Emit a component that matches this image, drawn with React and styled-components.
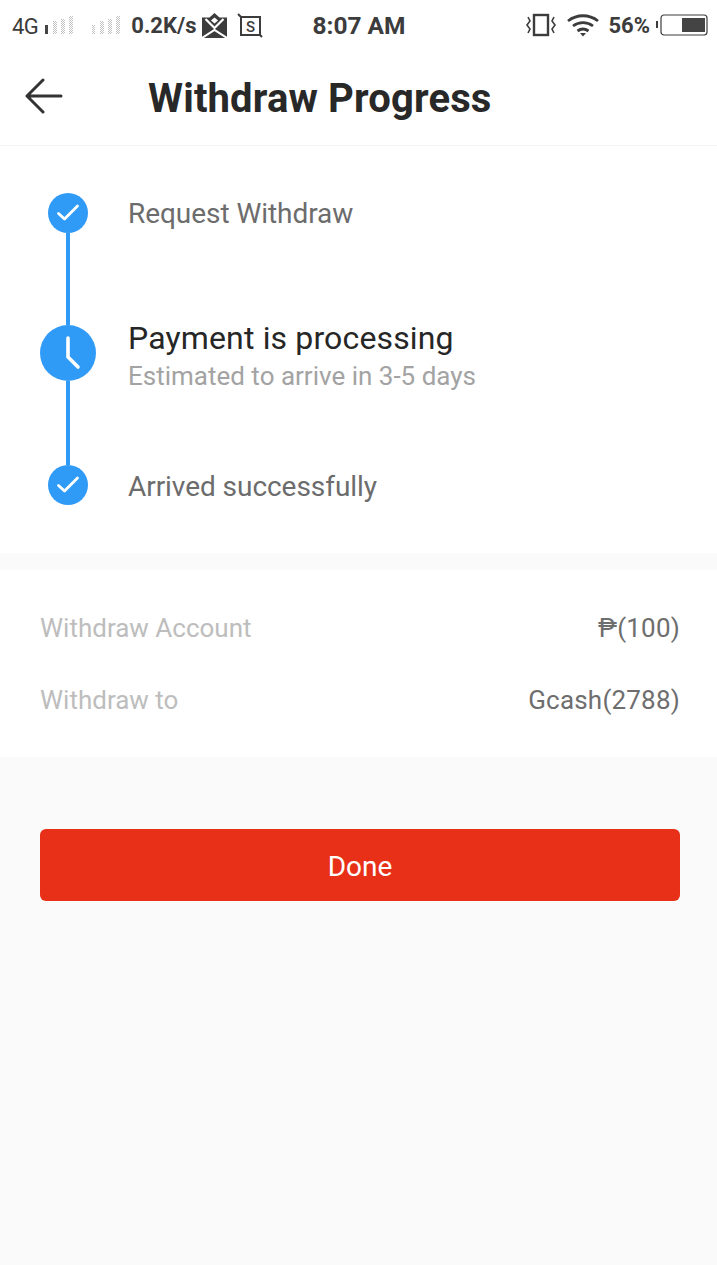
import React from "react";
import styled, { createGlobalStyle } from "styled-components";

const GlobalStyle = createGlobalStyle`
  html, body {
    margin: 0;
    padding: 0;
    background: #fafafa;
    font-family: Roboto, "Liberation Sans", sans-serif;
  }
`;

const Page = styled.div`
  width: 717px;
  height: 1265px;
  overflow: hidden;
  background: #fafafa;
`;

const StatusBar = styled.div`
  height: 50px;
  background: #fff;
  display: grid;
  grid-template-columns: 1fr auto 1fr;
  align-items: center;
  color: #3c3c3c;
`;

const StatusLeft = styled.div`
  display: flex;
  align-items: center;
  padding-left: 12px;
`;

const StatusRight = styled.div`
  display: flex;
  align-items: center;
  justify-content: flex-end;
  padding-right: 9px;
`;

const NetworkType = styled.span`
  font-size: 22px;
  margin: 3px 7px 0 0;
  letter-spacing: -0.5px;
`;

const BarsGroup = styled.svg`
  flex: none;
  margin-right: ${(p) => p.$gap}px;
`;

const Speed = styled.span`
  font-size: 22px;
  font-weight: 700;
  margin: 0 6px 0 0;
`;

const Clock = styled.span`
  font-size: 24.5px;
  font-weight: 700;
  margin-left: 1px;
`;

const Percent = styled.span`
  font-size: 22px;
  font-weight: 700;
  margin: 0 6px 0 9px;
`;

const MailSvg = styled.svg`
  flex: none;
  margin-right: 10px;
`;

const VibrateSvg = styled.svg`
  flex: none;
  margin-right: 11px;
`;

const Header = styled.header`
  height: 95px;
  background: #fff;
  border-bottom: 1px solid #f5f5f5;
  display: flex;
  align-items: center;
  padding-left: 24px;
`;

const BackSvg = styled.svg`
  flex: none;
  margin-top: -4px;
`;

const Title = styled.h1`
  margin: 2px 0 0 84px;
  font-size: 40px;
  letter-spacing: 0.15px;
  font-weight: 700;
  color: #282828;
`;

const StepsCard = styled.section`
  height: 360px;
  padding: 47px 40px 0;
  background: #fff;
  display: flex;
  margin-bottom: 17px;
`;

const Rail = styled.div`
  width: 56px;
  display: flex;
  flex-direction: column;
  align-items: center;
`;

const Dot = styled.div`
  flex: none;
  width: ${(p) => (p.$big ? 56 : 40)}px;
  height: ${(p) => (p.$big ? 56 : 40)}px;
  border-radius: 50%;
  background: #2f9bf7;
  display: flex;
  align-items: center;
  justify-content: center;
`;

const Line = styled.div`
  flex: none;
  width: 4px;
  height: ${(p) => p.$h}px;
  background: #2f9bf7;
`;

const StepTexts = styled.div`
  margin-left: 32px;
  display: flex;
  flex-direction: column;
`;

const DoneStep = styled.div`
  height: 40px;
  display: flex;
  align-items: center;
  font-size: 28px;
  letter-spacing: -0.05px;
  color: #6c6c6c;
`;

const ActiveStep = styled.div`
  box-sizing: border-box;
  height: 233px;
  padding-top: 15px;
  display: flex;
  flex-direction: column;
  justify-content: center;
`;

const ActiveTitle = styled.div`
  font-size: 32px;
  letter-spacing: 0.15px;
  line-height: 38px;
  color: #262626;
`;

const ActiveSub = styled.div`
  font-size: 26px;
  line-height: 39px;
  color: #a3a3a3;
`;

const InfoCard = styled.section`
  background: #fff;
  height: 187px;
  padding: 22px 37px 0 40px;
  box-sizing: border-box;
  margin-bottom: 72px;
`;

const InfoRow = styled.div`
  height: 72px;
  display: flex;
  align-items: center;
  justify-content: space-between;
  font-size: 26px;
`;

const InfoLabel = styled.span`
  color: #bdbdbd;
`;

const InfoValue = styled.span`
  color: #6e6e6e;
  letter-spacing: 0.2px;
`;

const DoneButton = styled.button`
  display: block;
  width: 640px;
  height: 72px;
  margin-left: 40px;
  padding: 2px 0 0;
  border: none;
  border-radius: 6px;
  background: #e83018;
  color: #fff;
  font-family: inherit;
  font-size: 28px;
`;

const BackArrow = () => (
  <BackSvg width="40" height="36" viewBox="0 0 40 36" fill="none" stroke="#333" strokeWidth="3" strokeLinecap="round" strokeLinejoin="round">
    <path d="M37 18H3M19 2L3 18l16 16" />
  </BackSvg>
);

const CheckIcon = () => (
  <svg width="24" height="24" viewBox="0 0 24 24" fill="none" stroke="#fff" strokeWidth="2.8" strokeLinecap="round" strokeLinejoin="round">
    <path d="M2.5 12.5l6 5.5L21.5 5" />
  </svg>
);

const ClockHands = () => (
  <svg width="56" height="56" viewBox="0 0 56 56" fill="none" stroke="#fff" strokeWidth="3.6" strokeLinecap="round" strokeLinejoin="round">
    <path d="M28 13v19l10 10" />
  </svg>
);

const SignalBars = ({ active, gap }) => (
  <BarsGroup $gap={gap} width="28" height="20" viewBox="0 0 28 20">
    <defs>
      <pattern id="dither" width="2" height="2" patternUnits="userSpaceOnUse">
        <rect width="1" height="1" fill="#c4c4c4" />
        <rect x="1" y="1" width="1" height="1" fill="#c4c4c4" />
      </pattern>
    </defs>
    <rect x="0" y="10" width="3" height="9" fill={active ? "#444" : "url(#dither)"} />
    <rect x="8" y="6" width="4" height="13" fill="url(#dither)" />
    <rect x="16" y="4" width="4" height="15" fill="url(#dither)" />
    <rect x="24" y="1" width="4" height="18" fill="url(#dither)" />
  </BarsGroup>
);

const MailIcon = () => (
  <MailSvg width="25" height="25" viewBox="0 0 25 25">
    <path d="M12.500 0l5 4.500h7.500v20.500H0V4.500h7.500z" fill="#3c3c3c" />
    <path d="M3.500 6L12.500 15l9-9" fill="none" stroke="#fff" strokeWidth="2.200" />
    <path d="M0 25l12.500-8L25 25" fill="none" stroke="#fff" strokeWidth="2" />
    <path d="M12.500 4.500l3.500 3-3.500 3-3.500-3z" fill="#fff" />
  </MailSvg>
);

const ScreenshotIcon = () => (
  <svg width="26" height="25" viewBox="0 0 26 25" fill="none" stroke="#3c3c3c" strokeWidth="2">
    <rect x="4" y="4" width="19" height="18" />
    <path d="M1 1l3 3M23 22l2 2" />
    <text x="13.5" y="18.5" fontSize="15" fontWeight="500" fill="#3c3c3c" stroke="none" textAnchor="middle" fontFamily="Roboto">S</text>
  </svg>
);

const VibrateIcon = () => (
  <VibrateSvg width="30" height="24" viewBox="0 0 30 24" fill="none" stroke="#3c3c3c" strokeWidth="2.4">
    <rect x="8" y="2" width="14" height="20" />
    <path d="M2 4l2 4-3 4 3 4-2 4M28 4l-2 4 3 4-3 4 2 4" strokeWidth="1.6" />
  </VibrateSvg>
);

const WifiIcon = () => (
  <svg width="32" height="23" viewBox="0 0 32 23" fill="none" stroke="#3c3c3c" strokeWidth="2.8">
    <path d="M1 7c9-7 21-7 30 0M6 12c6-4.500 14-4.500 20 0M10.500 17c3.500-2.500 7.500-2.500 11 0" />
    <path d="M13 19h6l-3 3.500z" fill="#3c3c3c" stroke="none" />
  </svg>
);

const BatteryIcon = () => (
  <svg width="52" height="22" viewBox="0 0 52 22">
    <rect x="0" y="7" width="2" height="7" fill="#3c3c3c" />
    <rect x="5" y="1" width="46" height="20" rx="3" fill="none" stroke="#3c3c3c" strokeWidth="1.2" />
    <rect x="26" y="4" width="23" height="14" fill="#444" />
  </svg>
);

const App = () => {
  return (
    <Page>
      <GlobalStyle />
      <StatusBar>
        <StatusLeft>
          <NetworkType>4G</NetworkType>
          <SignalBars active gap={19} />
          <SignalBars gap={11} />
          <Speed>0.2K/s</Speed>
          <MailIcon />
          <ScreenshotIcon />
        </StatusLeft>
        <Clock>8:07 AM</Clock>
        <StatusRight>
          <VibrateIcon />
          <WifiIcon />
          <Percent>56%</Percent>
          <BatteryIcon />
        </StatusRight>
      </StatusBar>
      <Header>
        <BackArrow />
        <Title>Withdraw Progress</Title>
      </Header>
      <StepsCard>
        <Rail>
          <Dot><CheckIcon /></Dot>
          <Line $h={92} />
          <Dot $big><ClockHands /></Dot>
          <Line $h={84} />
          <Dot><CheckIcon /></Dot>
        </Rail>
        <StepTexts>
          <DoneStep>Request Withdraw</DoneStep>
          <ActiveStep>
            <ActiveTitle>Payment is processing</ActiveTitle>
            <ActiveSub>Estimated to arrive in 3-5 days</ActiveSub>
          </ActiveStep>
          <DoneStep>Arrived successfully</DoneStep>
        </StepTexts>
      </StepsCard>
      <InfoCard>
        <InfoRow>
          <InfoLabel>Withdraw Account</InfoLabel>
          <InfoValue>₱(100)</InfoValue>
        </InfoRow>
        <InfoRow>
          <InfoLabel>Withdraw to</InfoLabel>
          <InfoValue>Gcash(2788)</InfoValue>
        </InfoRow>
      </InfoCard>
      <DoneButton>Done</DoneButton>
    </Page>
  );
};

export default App;
